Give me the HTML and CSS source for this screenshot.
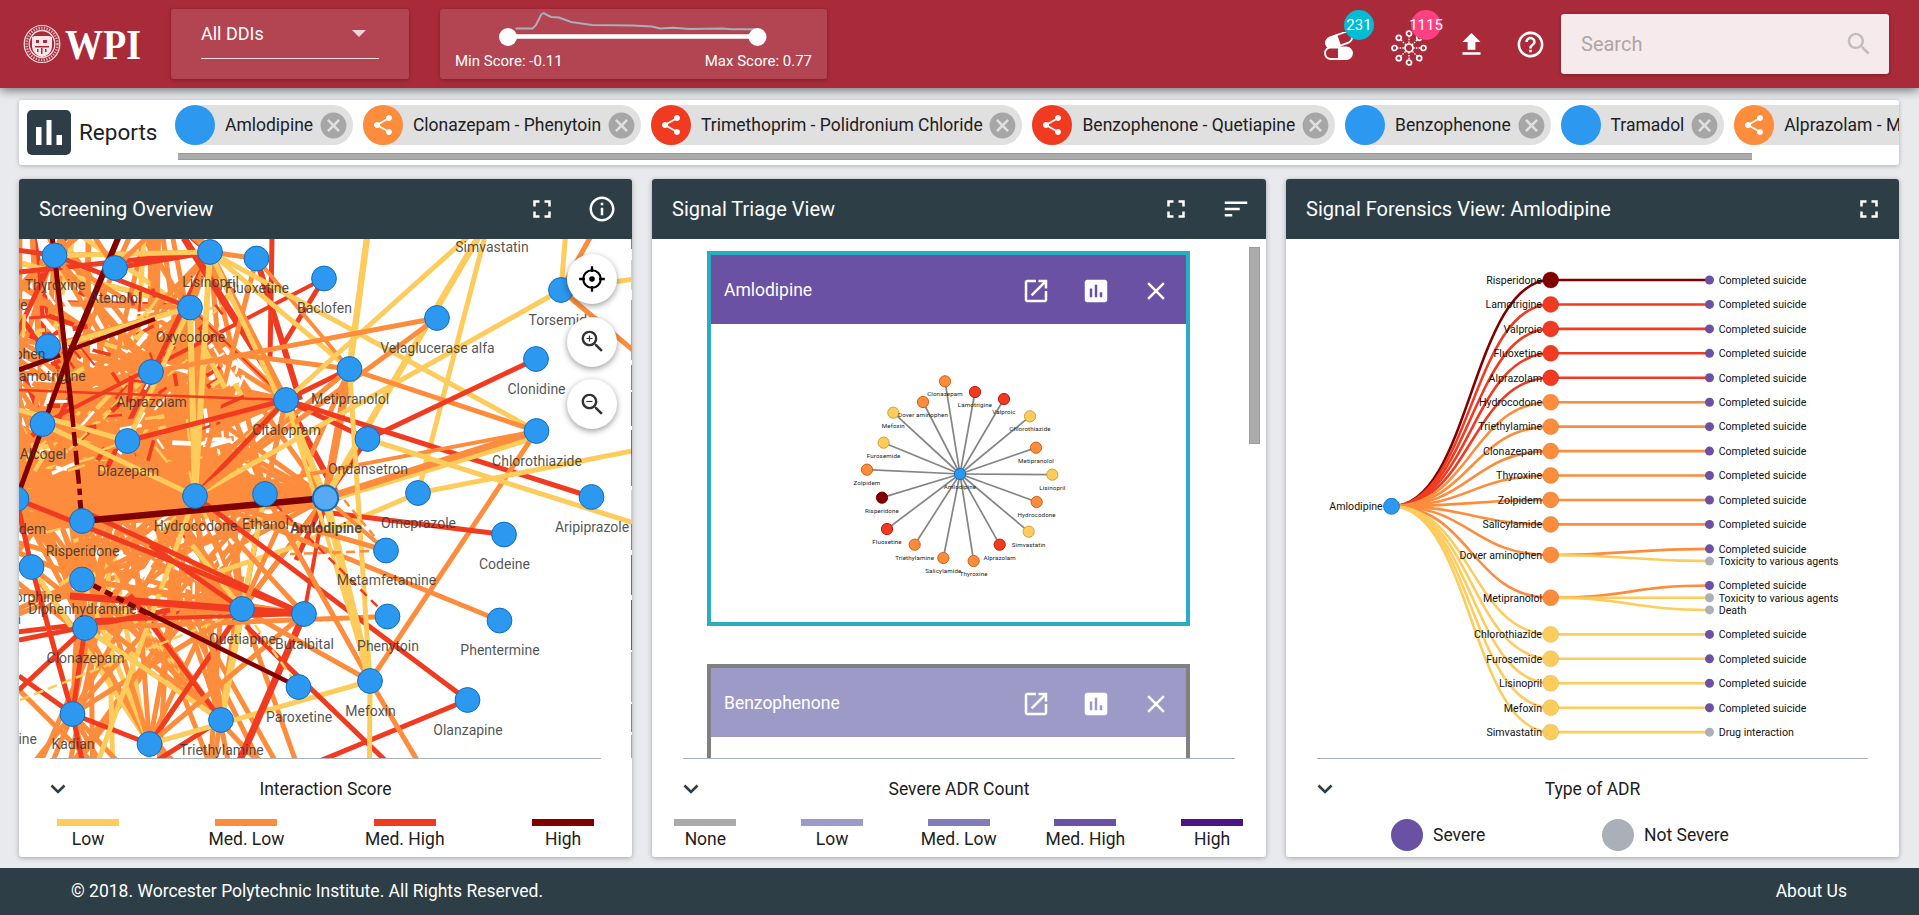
FILE: index.html
```html
<!DOCTYPE html>
<html lang="en">
<head>
<meta charset="utf-8">
<title>WPI Drug Interactions</title>
<link rel="stylesheet" href="styles.css">
</head>
<body>
<svg class="sprite" aria-hidden="true">
  <symbol id="i-full" viewBox="0 0 24 24"><path d="M7 14H5v5h5v-2H7v-3zm-2-4h2V7h3V5H5v5zm12 7h-3v2h5v-5h-2v3zM14 5v2h3v3h2V5h-5z"/></symbol>
  <symbol id="i-info" viewBox="0 0 24 24"><path d="M11 17h2v-6h-2v6zm1-15C6.48 2 2 6.48 2 12s4.480 10 10 10 10-4.480 10-10S17.520 2 12 2zm0 18c-4.410 0-8-3.590-8-8s3.590-8 8-8 8 3.590 8 8-3.590 8-8 8zM11 9h2V7h-2v2z"/></symbol>
  <symbol id="i-help" viewBox="0 0 24 24"><path d="M11 18h2v-2h-2v2zm1-16C6.480 2 2 6.480 2 12s4.480 10 10 10 10-4.480 10-10S17.520 2 12 2zm0 18c-4.410 0-8-3.590-8-8s3.590-8 8-8 8 3.590 8 8-3.590 8-8 8zm0-14c-2.210 0-4 1.790-4 4h2c0-1.100.9-2 2-2s2 .9 2 2c0 2-3 1.750-3 5h2c0-2.250 3-2.500 3-5 0-2.210-1.790-4-4-4z"/></symbol>
  <symbol id="i-sort" viewBox="0 0 24 24"><path d="M3 18h6v-2H3v2zM3 6v2h18V6H3zm0 7h12v-2H3v2z"/></symbol>
  <symbol id="i-upload" viewBox="0 0 24 24"><path d="M9 16h6v-6h4l-7-7-7 7h4zm-4 2h14v2H5z"/></symbol>
  <symbol id="i-search" viewBox="0 0 24 24"><path d="M15.500 14h-.79l-.28-.27C15.410 12.590 16 11.110 16 9.500 16 5.910 13.090 3 9.500 3S3 5.910 3 9.500 5.910 16 9.500 16c1.610 0 3.090-.59 4.230-1.570l.27.280v.79l5 4.990L20.490 19l-4.990-5zm-6 0C7.010 14 5 11.990 5 9.500S7.010 5 9.500 5 14 7.010 14 9.500 11.990 14 9.500 14z"/></symbol>
  <symbol id="i-zin" viewBox="0 0 24 24"><use href="#i-search"/><path d="M12 10h-2v2H9v-2H7V9h2V7h1v2h2v1z"/></symbol>
  <symbol id="i-zout" viewBox="0 0 24 24"><use href="#i-search"/><path d="M7 9h5v1H7z"/></symbol>
  <symbol id="i-locate" viewBox="0 0 24 24"><circle cx="12" cy="12" r="7.500" fill="none" stroke="currentColor" stroke-width="1.800"/><path d="M11 1h2v5h-2zM11 18h2v5h-2zM1 11h5v2H1zM18 11h5v2h-5z"/><circle cx="12" cy="12" r="2.400"/></symbol>
  <symbol id="i-open" viewBox="0 0 24 24"><path d="M19 19H5V5h7V3H5c-1.110 0-2 .9-2 2v14c0 1.100.89 2 2 2h14c1.100 0 2-.9 2-2v-7h-2v7zM14 3v2h3.590l-9.830 9.830 1.410 1.410L19 6.410V10h2V3h-7z"/></symbol>
  <symbol id="i-chart" viewBox="0 0 24 24"><path d="M19 3H5c-1.100 0-2 .9-2 2v14c0 1.100.9 2 2 2h14c1.100 0 2-.9 2-2V5c0-1.100-.9-2-2-2zM9 17H7v-7h2v7zm4 0h-2V7h2v10zm4 0h-2v-4h2v4z"/></symbol>
  <symbol id="i-close" viewBox="0 0 24 24"><path d="M19 6.410L17.590 5 12 10.590 6.410 5 5 6.410 10.590 12 5 17.590 6.410 19 12 13.410 17.590 19 19 17.590 13.410 12z"/></symbol>
  <symbol id="i-share" viewBox="0 0 24 24"><path d="M18 16.080c-.76 0-1.440.3-1.960.77L8.910 12.700c.05-.23.09-.46.09-.7s-.04-.47-.09-.7l7.050-4.110c.54.5 1.250.81 2.040.81 1.660 0 3-1.340 3-3s-1.340-3-3-3-3 1.340-3 3c0 .24.040.47.090.7L8.040 9.810C7.500 9.310 6.790 9 6 9c-1.660 0-3 1.340-3 3s1.340 3 3 3c.79 0 1.500-.31 2.040-.81l7.120 4.160c-.05.210-.08.430-.08.650 0 1.610 1.310 2.920 2.920 2.920s2.920-1.310 2.920-2.920-1.310-2.920-2.920-2.920z"/></symbol>
  <symbol id="i-cancel" viewBox="0 0 24 24"><path d="M12 2C6.470 2 2 6.470 2 12s4.470 10 10 10 10-4.470 10-10S17.530 2 12 2zm5 13.590L15.590 17 12 13.410 8.410 17 7 15.590 10.590 12 7 8.410 8.410 7 12 10.590 15.590 7 17 8.410 13.410 12 17 15.590z"/></symbol>
</svg>

<header class="top">
  <svg class="logo" viewBox="0 0 118 40">
    <g fill="none" stroke="#f3dfe1">
      <ellipse cx="19" cy="20" rx="17.800" ry="18.500" stroke-width="1.200"/>
      <ellipse cx="19" cy="20" rx="15.500" ry="16" stroke-width="2.600" stroke-dasharray="1.400 1.300" opacity=".7"/>
      <ellipse cx="19" cy="20" rx="12.800" ry="13.500" stroke-width="1.300"/>
    </g>
    <path d="M9 13q10-5 20 0v10q-1 8-10 10q-9-2-10-10z" fill="#f6e6e8"/>
    <path d="M12 12l2-3 2 2 3-3 3 3 2-2 2 3zM13 16h3v3h-3zM20 16h4v3h-4zM12 22h14v1.500H12zM18 24h1.500v6H18zM14 25h1.500v3H14zM22 25h1.500v3H22z" fill="#a92b3a"/>
    <text class="logo-text" x="42" y="35" textLength="76" lengthAdjust="spacingAndGlyphs">WPI</text>
  </svg>
  <div class="box select"><div class="select-line"><span>All DDIs</span><i class="tri"></i></div></div>
  <div class="box range">
    <svg class="slider" viewBox="440 9 387 45">
      <path d="M515.500 28.500H532.500L536 25 541 15q2-3 5-.5l5 2.500 8 .5 12 4.500 21 3 40 .5 20 1 8 2 13-.7 17 1.200 33-.5 8 .8H757" fill="none" stroke="#a9b0b7" stroke-width="2"/>
      <path d="M508 36.500H757" stroke="#fff" stroke-width="4.600"/>
      <circle cx="508" cy="37" r="9" fill="#fff"/><circle cx="757.500" cy="37" r="9" fill="#fff"/>
    </svg>
    <div class="scores"><span>Min Score: -0.11</span><span>Max Score: 0.77</span></div>
  </div>
  <div class="tools">
    <div class="tool pills">
      <svg viewBox="0 0 30 28"><g transform="rotate(-20 14 8)"><rect x="1.500" y="3" width="27" height="11" rx="5.500" fill="none" stroke="#fff" stroke-width="1.800"/><path d="M7 2.200h8v12.600H7a6.300 6.300 0 010-12.600z" fill="#fff"/></g><rect x="1" y="15.500" width="27" height="11.500" rx="5.700" fill="#a92b3a" stroke="#fff" stroke-width="1.800"/><path d="M14 15h8a6.200 6.200 0 010 12.500h-8z" fill="#fff"/></svg>
      <b class="badge cyan">231</b>
    </div>
    <div class="tool net">
      <svg viewBox="-18 -18 36 36"><g stroke="#fff" fill="none"><path d="M0-12V12M-12 0H12M-8-8L8 8M8-8L-8 8" stroke-width="1.300" stroke-dasharray="1.500 1.200"/><g fill="#a92b3a" stroke-width="1.700"><circle r="4"/><circle cy="-14.500" r="2.500"/><circle cy="14.500" r="2.500"/><circle cx="-14.500" r="2.500"/><circle cx="14.500" r="2.500"/><circle cx="-10.200" cy="-10.200" r="2.500"/><circle cx="10.200" cy="-10.200" r="2.500"/><circle cx="-10.200" cy="10.200" r="2.500"/><circle cx="10.200" cy="10.200" r="2.500"/></g></g></svg>
      <b class="badge pink">1115</b>
    </div>
    <svg class="ic up"><use href="#i-upload"/></svg>
    <svg class="ic help"><use href="#i-help"/></svg>
  </div>
  <div class="search"><span>Search</span><svg class="ic"><use href="#i-search"/></svg></div>
</header>

<section class="reports">
  <div class="reports-icon"><svg viewBox="0 0 44 45"><path d="M9 17h5.500v18H9zM19.500 10h5v25h-5zM29.500 25h5.500v10h-5.500z" fill="#fff"/></svg></div>
  <h2>Reports</h2>
  <div class="strip">
    <div class="chips" id="chips"></div>
    <div class="hbar"></div>
  </div>
</section>

<main class="panels">
  <section class="card">
    <div class="head"><h3>Screening Overview</h3><svg class="ic"><use href="#i-full"/></svg><svg class="ic"><use href="#i-info"/></svg></div>
    <div class="body">
      <svg class="plot" id="overview" viewBox="19 239 613 519"></svg>
      <div class="fabs">
        <div class="fab black"><svg class="ic"><use href="#i-locate"/></svg></div>
        <div class="fab"><svg class="ic"><use href="#i-zin"/></svg></div>
        <div class="fab"><svg class="ic"><use href="#i-zout"/></svg></div>
      </div>
    </div>
    <div class="legend four">
      <div class="legend-title"><svg viewBox="0 0 16 10"><path d="M1.500 1.500L8 8l6.500-6.500"/></svg><span>Interaction Score</span></div>
      <div class="keys">
        <div><i class="c-y"></i>Low</div><div><i class="c-o"></i>Med. Low</div><div><i class="c-r"></i>Med. High</div><div><i class="c-d"></i>High</div>
      </div>
    </div>
  </section>

  <section class="card">
    <div class="head"><h3>Signal Triage View</h3><svg class="ic"><use href="#i-full"/></svg><svg class="ic"><use href="#i-sort"/></svg></div>
    <div class="body triage">
      <div class="profiles">
        <article class="profile active">
          <div class="phead"><span>Amlodipine</span><svg class="ic"><use href="#i-open"/></svg><svg class="ic"><use href="#i-chart"/></svg><svg class="ic"><use href="#i-close"/></svg></div>
          <svg class="star" id="star" viewBox="711 324 475 298"></svg>
        </article>
        <article class="profile">
          <div class="phead light"><span>Benzophenone</span><svg class="ic"><use href="#i-open"/></svg><svg class="ic"><use href="#i-chart"/></svg><svg class="ic"><use href="#i-close"/></svg></div>
        </article>
      </div>
      <div class="vbar"></div>
    </div>
    <div class="legend five">
      <div class="legend-title"><svg viewBox="0 0 16 10"><path d="M1.500 1.500L8 8l6.500-6.500"/></svg><span>Severe ADR Count</span></div>
      <div class="keys">
        <div><i class="p0"></i>None</div><div><i class="p1"></i>Low</div><div><i class="p2"></i>Med. Low</div><div><i class="p3"></i>Med. High</div><div><i class="p4"></i>High</div>
      </div>
    </div>
  </section>

  <section class="card">
    <div class="head"><h3>Signal Forensics View: Amlodipine</h3><svg class="ic"><use href="#i-full"/></svg></div>
    <div class="body"><svg class="plot" id="tree" viewBox="1286 239 613 519"></svg></div>
    <div class="legend">
      <div class="legend-title"><svg viewBox="0 0 16 10"><path d="M1.500 1.500L8 8l6.500-6.500"/></svg><span>Type of ADR</span></div>
      <div class="dots"><div><i class="p3"></i>Severe</div><div><i class="grey"></i>Not Severe</div></div>
    </div>
  </section>
</main>

<footer><span>© 2018. Worcester Polytechnic Institute. All Rights Reserved.</span><span>About Us</span></footer>
<script src="app.js"></script>
</body>
</html>
```
FILE: styles.css
```css
* { box-sizing: border-box; }
body { margin: 0; width: 1919px; height: 915px; overflow: hidden; display: flex; flex-direction: column; background: #e8eaee; font-family: Roboto, "Liberation Sans", sans-serif; font-size: 17.500px; color: #212121; }
h2, h3 { margin: 0; font-weight: 400; }
.sprite { display: none; }
.ic { width: 30px; height: 30px; fill: currentColor; flex: none; display: block; }

.top { flex: none; height: 88px; background: #a92b3a; color: #fff; display: flex; align-items: flex-start; box-shadow: 0 2px 10px rgba(0,0,0,.55); position: relative; }
.logo { width: 118px; height: 40px; margin: 24px 30px 0 23px; flex: none; }
.logo-text { font: bold 43px "Liberation Serif", serif; fill: #fff; }
.box { height: 70px; margin-top: 9px; background: rgba(255,255,255,.12); border-radius: 3px; box-shadow: 0 1px 4px rgba(0,0,0,.3); flex: none; }
.select { width: 238px; padding: 0 30px; font-size: 18px; }
.select-line { height: 50px; border-bottom: 1px solid #f0dfe1; display: flex; align-items: center; justify-content: space-between; padding: 0 13px 1px 0; }
.tri { border: 7px solid transparent; border-top-color: #ecd5d8; border-bottom: 0; }
.range { width: 387px; margin-left: 31px; }
.slider { display: block; width: 387px; height: 45px; overflow: visible; }
.scores { display: flex; justify-content: space-between; padding: 0 15px; font-size: 15px; line-height: 18px; margin-top: -2px; }
.tools { margin-left: auto; display: flex; height: 88px; align-items: center; flex: none; }
.tool { position: relative; }
.pills { width: 30px; height: 28px; margin: 3px 37px 0 0; }
.net { width: 36px; height: 36px; margin: 7px 29px 0 0; }
.tool svg { display: block; width: 100%; height: 100%; }
.badge { position: absolute; width: 30px; height: 30px; border-radius: 50%; font-weight: 400; font-size: 15px; display: flex; align-items: center; justify-content: center; }
.pills .badge { left: 20px; top: -22px; background: #00bcd4; }
.net .badge { left: 20px; top: -20px; background: #ff4081; }
.up { margin-right: 28px; }
.up, .help { width: 31px; height: 31px; }
.help { margin-right: 15px; }
.search { width: 328px; height: 60px; margin: 14px 30px 0 0; background: #f6eaec; border-radius: 3px; box-shadow: 0 1px 4px rgba(0,0,0,.3); display: flex; align-items: center; justify-content: space-between; padding: 0 15px 0 20px; color: #aca6a8; font-size: 20px; flex: none; }
.search .ic { color: #c5bcbe; }

.reports { flex: none; margin: 12px 20px 0 19px; height: 65px; background: #fff; border-radius: 3px; box-shadow: 0 1px 4px rgba(0,0,0,.25); display: flex; padding: 5px 0 0 8px; }
.reports-icon { width: 44px; height: 45px; margin-top: 5px; background: #2d3e46; border-radius: 5px; flex: none; }
.reports-icon svg { display: block; }
.reports h2 { font-size: 22.500px; line-height: 55px; width: 104px; padding-left: 8px; flex: none; }
.strip { flex: 1; min-width: 0; overflow: hidden; }
.chips { display: flex; gap: 10px; overflow: hidden; }
.chip { flex: none; height: 40px; border-radius: 20px; background: #e0e0e0; display: flex; align-items: center; padding-right: 4px; }
.chip span { margin: 0 4.800px 1px 10px; }
.chip .av { width: 40px; height: 40px; border-radius: 50%; display: flex; align-items: center; justify-content: center; color: #fff; }
.av .ic { width: 24px; height: 24px; }
.av.blue { background: #2c98f0; }
.av.orange { background: #fd8d3c; }
.av.red { background: #f03b20; }
.chip > .ic { color: #a6a6a6; width: 31px; height: 31px; }
.hbar { width: 1574px; height: 7px; margin: 8px 0 0 3px; background: #ababab; border-top: 1px solid #999; border-bottom: 1px solid #999; }

.panels { flex: none; display: grid; grid-template-columns: 613px 614px 613px; gap: 20px; margin: 14px 0 0 19px; height: 678px; }
.card { background: #fff; border-radius: 3px; box-shadow: 0 1px 5px rgba(0,0,0,.3); display: flex; flex-direction: column; overflow: hidden; }
.head { height: 60px; flex: none; background: #2d3e46; color: #fff; display: flex; align-items: center; gap: 30px; padding: 0 15px 0 20px; }
.head h3 { font-size: 20px; flex: 1; white-space: nowrap; }
.body { height: 519px; flex: none; position: relative; overflow: hidden; }
.plot { display: block; width: 613px; height: 519px; }
.fabs { position: absolute; left: 548px; top: 15px; display: flex; flex-direction: column; gap: 12.500px; }
.fab { width: 50px; height: 50px; border-radius: 50%; background: #fff; box-shadow: 0 2px 6px rgba(0,0,0,.4); display: flex; align-items: center; justify-content: center; color: #333; }
.fab .ic { width: 29px; height: 29px; }
.fab.black { color: #000; }
.fab.black .ic { width: 28px; height: 28px; }

.triage { display: flex; }
.profiles { padding: 12px 0 0 55px; display: flex; flex-direction: column; gap: 38px; }
.profile { width: 483px; height: 375px; flex: none; border: 4px solid #808080; background: #fff; }
.profile.active { border-color: #29adc1; }
.phead { height: 69px; background: #6a51a3; color: #fff; display: flex; align-items: center; gap: 30px; padding: 2px 15px 0 13px; }
.phead.light { background: #9e9ac8; }
.phead span { flex: 1; padding-bottom: 2px; }
.star { display: block; width: 475px; height: 298px; }
.vbar { width: 11px; height: 197px; margin: 8px 0 0 59px; background: #ababab; border: 1px solid #9c9c9c; }

.legend { flex: 1; }
.legend-title { margin: 0 31px 0 31px; height: 60px; border-top: 1px solid #a9b0b7; display: flex; align-items: center; }
.legend-title svg { width: 16px; height: 10px; fill: none; stroke: #2d3e46; stroke-width: 2.600; flex: none; }
.legend-title span { flex: 1; text-align: center; padding-right: 16px; }
.keys { display: grid; text-align: center; line-height: 24px; padding-top: 1px; }
.keys i { display: block; width: 62px; height: 7px; margin: 0 auto 1px; }
.four .keys { grid-template-columns: repeat(4, 158.300px); margin-left: -10px; }
.five .keys { grid-template-columns: repeat(5, 126.700px); margin-left: -10px; }
.c-y { background: #fecc5c; } .c-o { background: #fd8d3c; } .c-r { background: #f03b20; } .c-d { background: #800000; }
.p0 { background: #ababab; } .p1 { background: #9e9ac8; } .p2 { background: #807dba; } .p3 { background: #6a51a3; } .p4 { background: #4a1486; }
.dots { display: grid; grid-template-columns: 211px 200px; padding: 1px 0 0 105px; }
.dots div { display: flex; align-items: center; gap: 10px; }
.dots i { width: 32px; height: 32px; border-radius: 50%; }
.grey { background: #a9b0b7; }

footer { margin-top: 11px; flex: 1; background: #2d3e46; color: #fff; display: flex; justify-content: space-between; align-items: center; padding: 0 72px 2px 71px; }

.t-net { font-size: 14px; fill: #333; fill-opacity: .85; text-anchor: middle; }
.t-net.end { text-anchor: end; }
.t-net.sel { font-weight: 700; }
.t-star { font-size: 6.200px; fill: #222; text-anchor: middle; letter-spacing: .12px; }
.t-tree { font-size: 10.600px; fill: #111; }
.t-tree.end { text-anchor: end; }
```
FILE: app.js
```js
const Y = '#fecc5c', O = '#fd8d3c', R = '#f03b20', D = '#800000', B = '#2c98f0';

/* ---- report chips ---- */
const share = '<svg class="ic"><use href="#i-share"/></svg>';
document.getElementById('chips').innerHTML = [
  ['Amlodipine', 'blue'], ['Clonazepam - Phenytoin', 'orange'], ['Trimethoprim - Polidronium Chloride', 'red'],
  ['Benzophenone - Quetiapine', 'red'], ['Benzophenone', 'blue'], ['Tramadol', 'blue'], ['Alprazolam - Mefoxin', 'orange']
].map(([t, c]) => `<div class="chip"><div class="av ${c}">${c === 'blue' ? '' : share}</div><span>${t}</span><svg class="ic"><use href="#i-cancel"/></svg></div>`).join('');

/* ---- interaction network ---- */
const N = {
  Thyroxine: [54.5, 255.5], Atenolol: [115, 268], Lisinopril: [210, 252], Fluoxetine: [256.5, 258.5], Baclofen: [324, 278.5],
  Oxycodone: [190, 307.5], Lamotrigine: [48, 346.5], Alprazolam: [151, 372], Citalopram: [286, 400], Metipranolol: [349.5, 369],
  Alcogel: [42.5, 424], Diazepam: [127.5, 441], Zolpidem: [16.5, 499], Hydrocodone: [195, 496], Ethanol: [265, 494],
  Amlodipine: [325.5, 498], 'Velaglucerase alfa': [437, 318], Torsemide: [561, 290], Clonidine: [536, 359],
  Chlorothiazide: [536.5, 431], Ondansetron: [367.5, 439], Omeprazole: [418, 493], Aripiprazole: [591.5, 497],
  Risperidone: [82, 521], Morphine: [31.5, 567], Diphenhydramine: [82, 579.5], Clonazepam: [85, 628], Quetiapine: [242, 609],
  Butalbital: [304, 614], Kadian: [72.5, 714], Triethylamine: [221, 720], Paroxetine: [298.5, 687], Metamfetamine: [386, 550.5],
  Codeine: [504, 534.5], Phenytoin: [387.5, 616.5], Phentermine: [499.5, 620.5], Mefoxin: [370, 681], Olanzapine: [467.5, 700]
};
const S = [490, 217], K = [149.5, 744];
let out = '';
const P = p => Array.isArray(p) ? p : N[p];
function line(a, b, c, w = 5, dash) {
  const [x1, y1] = P(a), [x2, y2] = P(b);
  out += `<line x1="${x1}" y1="${y1}" x2="${x2}" y2="${y2}" stroke="${c}" stroke-width="${w}"${dash ? ` stroke-dasharray="${dash}"` : ''}/>`;
}
let seed = 11;
const rnd = () => (seed = (seed * 16807) % 2147483647) / 2147483647;
const core = [N.Oxycodone, N.Alprazolam, N.Citalopram, N.Diazepam, N.Hydrocodone, N.Ethanol, N.Risperidone, N.Alcogel, N.Lamotrigine, N.Diphenhydramine, N.Clonazepam, N.Quetiapine, N.Zolpidem, N.Amlodipine, N.Thyroxine, N.Lisinopril];
const far = [[-60, 300], [-90, 380], [-80, 450], [-60, 520], [-100, 580], [-40, 400], [20, 160], [90, 150], [160, 170], [-30, 250], [-50, 640], [30, 200], [150, 140], [-10, 450], [-20, 330]];
const pick = l => l[Math.floor(rnd() * l.length)];
const tone = () => { const r = rnd(); return r < .8 ? O : r < .89 ? R : Y; };
const jit = (p, d) => [p[0] + (rnd() - .5) * d, p[1] + (rnd() - .5) * d];

/* distant links behind the labelled nodes */
for (let i = 0; i < 84; i++) line(jit(pick(core), 10), pick(far), tone(), 5);
for (let i = 0; i < 16; i++) line([25 + rnd() * 230, 480 + rnd() * 110], [25 + rnd() * 270, 780], rnd() < .8 ? O : Y, 5);
for (let i = 0; i < 50; i++) line([19 + rnd() * 190, 330 + rnd() * 170], [60 + rnd() * 190, 330 + rnd() * 180], O, 6);
for (let i = 0; i < 14; i++) line([190, 307], [60 + i * 13, 480], O, 5);
for (let i = 0; i < 14; i++) line([286, 400], [60, 370 + i * 10], O, 5);
for (let i = 0; i < 44; i++) line([19 + rnd() * 120, 370 + rnd() * 120], [160 + rnd() * 100, 400 + rnd() * 120], rnd() < .8 ? O : Y, 5, rnd() < .3 ? '12 7' : '');
for (let i = 0; i < core.length; i++) for (let j = i + 1; j < core.length; j++) if (rnd() < .8) line(core[i], core[j], rnd() < .88 ? O : tone(), 5);
line([19, 500], 'Amlodipine', O, 22); line([19, 478], [265, 487], O, 20);
line([19, 525], [240, 508], O, 14); line([19, 440], 'Citalopram', O, 9); line([19, 470], 'Citalopram', O, 8);

/* slivers of short links visible between the longer ones */
const sliver = (x, y, l, ang, c, w) => line([x, y], [x + l * Math.cos(ang), y + l * Math.sin(ang)], c, w);
for (let i = 0; i < 130; i++) {
  const x = 22 + rnd() * 225, yy = 285 + rnd() * 190;
  const target = pick([[286, 400], [190, 307], [127, 441], [195, 496], [17, 499]]);
  sliver(x, yy, 7 + rnd() * 20, Math.atan2(target[1] - yy, target[0] - x), pick([R, Y, '#fff', R, '#fff', Y]), 2 + rnd() * 3);
}
for (let i = 0; i < 45; i++) {
  const x = 40 + rnd() * 230, yy = 515 + rnd() * 100;
  sliver(x, yy, 6 + rnd() * 16, Math.atan2(496 - yy, 195 - x), pick([Y, '#fff', '#fff']), 2 + rnd() * 2.5);
}
for (let i = 0; i < 7; i++) line([120 + i * 4, 600 + i * 6], [200, 690 + i * 2], i % 2 ? Y : O, 4, '12 5');

for (const n of ['Morphine', 'Clonazepam', 'Diphenhydramine']) for (const m of [K, N.Kadian, N.Triethylamine]) line(n, m, pick([O, Y, O]));
for (const x of [20, 45, 90, 110, 135]) line('Kadian', [x, 780], O);
for (const n of ['Risperidone', 'Diazepam', 'Hydrocodone', 'Quetiapine', 'Ethanol']) { line(n, 'Triethylamine', O); line(n, K, O); line(n, 'Kadian', O); }
line([19, 690], [100, 770], O); line([19, 676], 'Kadian', R); line([19, 640], [170, 610], R); line([19, 690], 'Clonazepam', R);
line('Morphine', 'Kadian', R); line('Zolpidem', 'Morphine', R); line('Clonazepam', 'Kadian', R, 5);
line('Kadian', K, R); line('Kadian', [84, 770], R); line(K, [180, 765], O); line([150, 765], 'Triethylamine', R);
line([130, 595], 'Triethylamine', R); line('Clonazepam', 'Triethylamine', Y); line('Hydrocodone', [95, 770], Y);
line('Quetiapine', [297, 765], O); line('Quetiapine', 'Triethylamine', Y, 7); line('Quetiapine', K, R, 5);
line('Hydrocodone', 'Triethylamine', O, 6); line(K, [370, 681], Y); line('Butalbital', K, O, 5);
line('Butalbital', [240, 760], R, 7); line([246, 626], [390, 765], R); line([255, 625], 'Paroxetine', Y, 2.5, '10 5');
line('Clonazepam', 'Phenytoin', O); line('Quetiapine', 'Mefoxin', O); line('Quetiapine', 'Amlodipine', O);
line('Quetiapine', 'Ethanol', Y); line([192, 545], 'Quetiapine', Y); line([215, 573], [290, 548], Y); line([290, 548], 'Omeprazole', Y);
line([20, 700], [240, 612], Y, 2.5, '10 5'); line('Triethylamine', [203, 670], O, 2.5, '10 5');
line('Diphenhydramine', 'Butalbital', O); line([70, 596], 'Butalbital', R, 7); line([95, 620], 'Butalbital', R, 4); line([85, 512], 'Butalbital', R);
line('Zolpidem', 'Butalbital', R); line('Amlodipine', 'Butalbital', R, 4); line([150, 545], 'Quetiapine', R); line('Amlodipine', [296, 560], R, 5);
line('Hydrocodone', 'Butalbital', O, 5);

line([272, 238], [270, 360], R); line([184, 238], 'Citalopram', R, 7); line('Fluoxetine', [300, 400], R, 6);
line('Citalopram', [340, 500], R, 6); line('Baclofen', 'Alcogel', R, 4); line('Baclofen', [283, 345], R);
line('Oxycodone', 'Citalopram', O, 6); line('Oxycodone', 'Citalopram', R, 2); line('Lisinopril', 'Citalopram', O, 6);
line('Fluoxetine', 'Lisinopril', O); line('Fluoxetine', 'Hydrocodone', O); line('Atenolol', 'Lisinopril', R); line([19, 272], 'Lisinopril', R);
line('Thyroxine', [17, 250], R); line('Thyroxine', 'Lisinopril', Y); line('Thyroxine', 'Alprazolam', O); line('Thyroxine', 'Oxycodone', R);
line('Thyroxine', [80, 235], O); line('Atenolol', [80, 215], O); line('Atenolol', [170, 215], O); line('Lisinopril', 'Hydrocodone', Y, 6);
line([205, 350], [225, 388], Y); line('Oxycodone', [60, 345], Y); line('Oxycodone', 'Diazepam', Y); line('Oxycodone', 'Hydrocodone', Y, 6);
line('Lisinopril', 'Amlodipine', Y, 5); line('Lisinopril', 'Metipranolol', Y); line('Fluoxetine', 'Metipranolol', O, 4);
line('Diazepam', 'Citalopram', R); line([19, 390], 'Citalopram', R, 2.5); line('Hydrocodone', 'Citalopram', R); line('Ethanol', 'Citalopram', O);
line([19, 410], 'Diazepam', Y); line('Alcogel', 'Hydrocodone', Y); line([240, 355], 'Metipranolol', O); line('Metipranolol', 'Citalopram', R);
line('Metipranolol', 'Amlodipine', O, 8); line('Metipranolol', 'Hydrocodone', O); line('Metipranolol', 'Quetiapine', O);
line('Ondansetron', 'Citalopram', R); line('Ondansetron', 'Amlodipine', R); line('Citalopram', 'Amlodipine', Y, 6);

line('Metipranolol', [372, 200], Y, 6.5); line('Amlodipine', S, Y, 6.5); line('Omeprazole', S, Y); line('Citalopram', S, Y);
line('Torsemide', [566, 230], Y); line('Torsemide', 'Hydrocodone', Y); line('Lisinopril', 'Chlorothiazide', Y);
line('Metipranolol', 'Chlorothiazide', O); line('Velaglucerase alfa', 'Hydrocodone', O); line('Velaglucerase alfa', 'Alprazolam', O);
line('Clonidine', 'Ondansetron', R); line('Citalopram', 'Aripiprazole', R); line('Hydrocodone', 'Chlorothiazide', O, 4);
line([325, 501], [540, 436], Y, 6); line('Amlodipine', 'Chlorothiazide', O, 7); line('Chlorothiazide', 'Mefoxin', O);
line('Omeprazole', [632, 451], Y); line('Ondansetron', [640, 525], Y); line([323, 512], 'Codeine', R);
line('Hydrocodone', 'Phentermine', O); line('Hydrocodone', 'Olanzapine', R); line('Olanzapine', [310, 765], R);
line('Mefoxin', [369.5, 765], Y); line('Mefoxin', [420, 765], O); line('Mefoxin', 'Ethanol', O); line('Mefoxin', 'Amlodipine', Y, 8);
line('Mefoxin', 'Citalopram', Y, 4); line('Mefoxin', 'Metipranolol', Y); line('Hydrocodone', 'Metamfetamine', O); line('Amlodipine', 'Metamfetamine', O, 4);
line([336, 490], 'Metamfetamine', O, 2.5, '8 5'); line([290, 554], 'Metamfetamine', O, 2.5, '9 5'); line('Ethanol', 'Phenytoin', R, 2.5, '9 6');
line('Torsemide', [640, 356], O); line('Torsemide', [591, 236], O); line('Torsemide', [640, 278], Y);

line([52, 236], 'Thyroxine', D); line('Thyroxine', [72, 413], D, 5); line([72, 413], [80, 495], D, 4.5, '14 5');
line([119, 236], [67, 360], D, 6); line([67, 360], 'Zolpidem', D, 5); line([19, 370], [60, 355], D); line([70, 350], [155, 319], D, 4);
line([80, 500], 'Risperidone', D); line('Risperidone', 'Amlodipine', D, 6.5); line('Diphenhydramine', [150, 615], D, 5, '8 5'); line([140, 609], 'Paroxetine', D, 4.5);

for (const k in N) {
  const [x, y] = N[k], s = k === 'Amlodipine';
  out += `<circle cx="${x}" cy="${y}" r="${s ? 12.6 : 12.4}" fill="${s ? '#56aaf4' : B}" stroke="#0b6fc4" stroke-width="${s ? 2 : 1}"/>`;
}
out += `<circle cx="${K[0]}" cy="${K[1]}" r="12.4" fill="${B}" stroke="#0b6fc4"/>`;
for (const k in N) out += `<text class="t-net${k === 'Amlodipine' ? ' sel' : ''}" x="${N[k][0] + .5}" y="${N[k][1] + 34.5}">${k}</text>`;
out += '<text class="t-net" x="492" y="252">Simvastatin</text>';
[['Dover aminophen', 45.5, 359], ['Furosemide', 27.5, 310], ['Ibuprofen', 21, 624]].forEach(([t, x, y]) => out += `<text class="t-net end" x="${x}" y="${y}">${t}</text>`);
out += '<text class="t-net end" x="37" y="744">Valine</text>';
for (const [y, h, c] of [[239, 10, B], [260, 30, Y], [300, 60, O], [365, 25, B], [392, 34, '#776'], [430, 24, R], [454, 32, B], [490, 30, Y], [524, 26, B], [555, 40, R], [600, 50, '#665'], [652, 50, O], [704, 28, B], [735, 24, O]])
  out += `<rect x="631" y="${y}" width="1" height="${h}" fill="${c}"/>`;
document.getElementById('overview').innerHTML = out;

/* ---- star profile ---- */
const edge = { [Y]: '#d0a030', [O]: '#cc6010', [R]: '#c01808', [D]: '#700000', [B]: '#0b6fc4' };
const star = [['Clonazepam', 315, 94, O], ['Lamotrigine', 405, 126, R], ['Valproic', 492, 147, R], ['Chlorothiazide', 570, 199, Y], ['Metipranolol', 588, 293, O],
  ['Lisinopril', 637, 374, Y], ['Hydrocodone', 590, 456, O], ['Simvastatin', 566, 545, Y], ['Alprazolam', 479, 584, R], ['Thyroxine', 401, 633, O],
  ['Salicylamide', 310, 624, O], ['Triethylamine', 224, 584, O], ['Fluoxetine', 141, 537, R], ['Risperidone', 126, 443, D], ['Zolpidem', 81, 359, O],
  ['Furosemide', 131, 278, Y], ['Mefoxin', 160, 188, Y], ['Dover aminophen', 249, 156, O], ['Amlodipine', 360, 372, B]]
  .map(([t, x, y, c]) => [t, 840 + x / 3, 350 + y / 3, c]);
document.getElementById('star').innerHTML =
  star.map(([, x, y]) => `<line x1="960" y1="474" x2="${x}" y2="${y}" stroke="#858585" stroke-width="1.7"/>`).join('') +
  star.map(([, x, y, c]) => `<circle cx="${x}" cy="${y}" r="5.6" fill="${c}" stroke="${edge[c]}" stroke-width="1"/>`).join('') +
  star.map(([t, x, y]) => `<text class="t-star" x="${x}" y="${y + 15}">${t}</text>`).join('');

/* ---- forensics tree ---- */
const CS = 'Completed suicide', TX = 'Toxicity to various agents';
const rows = [['Risperidone', D], ['Lamotrigine', R], ['Valproic', R], ['Fluoxetine', R], ['Alprazolam', R], ['Hydrocodone', O], ['Triethylamine', O],
  ['Clonazepam', O], ['Thyroxine', O], ['Zolpidem', O], ['Salicylamide', O],
  ['Dover aminophen', O, [[CS, O], [TX, Y]]], ['Metipranolol', O, [[CS, O], [TX, Y], ['Death', Y]]],
  ['Chlorothiazide', Y], ['Furosemide', Y], ['Lisinopril', Y], ['Mefoxin', Y], ['Simvastatin', Y, [['Drug interaction', Y]]]];
const rx = 1391.5, ry = 506.3, mx = 1550.7, lx = 1709.5, step = 12.22;
let y = 280, links = '', dots = '', texts = '';
const curve = (x1, y1, x2, y2, c) => { const m = (x1 + x2) / 2; links += `<path d="M${x1} ${y1}C${m} ${y1} ${m} ${y2} ${x2} ${y2}" fill="none" stroke="${c}" stroke-width="2.6"/>`; };
const items = rows.map(([name, c, kids = [[CS, c]]]) => {
  const ys = kids.map((_, i) => y + i * step);
  y += (kids.length + 1) * step;
  return { name, c, kids, ys, my: (ys[0] + ys[ys.length - 1]) / 2 };
});
items.forEach(n => {
  curve(rx, ry, mx, n.my, n.c);
  n.kids.forEach(([t, c], i) => {
    curve(mx, n.my, lx, n.ys[i], c);
    dots += `<circle cx="${lx}" cy="${n.ys[i]}" r="4.5" fill="${t === CS ? '#6a51a3' : '#a9b0b7'}"/>`;
    texts += `<text class="t-tree" x="1718.7" y="${n.ys[i] + 3.8}">${t}</text>`;
  });
  dots += `<circle cx="${mx}" cy="${n.my}" r="8" fill="${n.c}" stroke="${edge[n.c]}" stroke-opacity=".5" stroke-width=".7"/>`;
  texts += `<text class="t-tree end" x="1542" y="${n.my + 3.8}">${n.name}</text>`;
});
dots += `<circle cx="${rx}" cy="${ry}" r="8" fill="${B}" stroke="#0b6fc4" stroke-width=".8"/>`;
texts += `<text class="t-tree end" x="1382.7" y="${ry + 3.8}">Amlodipine</text>`;
document.getElementById('tree').innerHTML = links + dots + texts;
```
